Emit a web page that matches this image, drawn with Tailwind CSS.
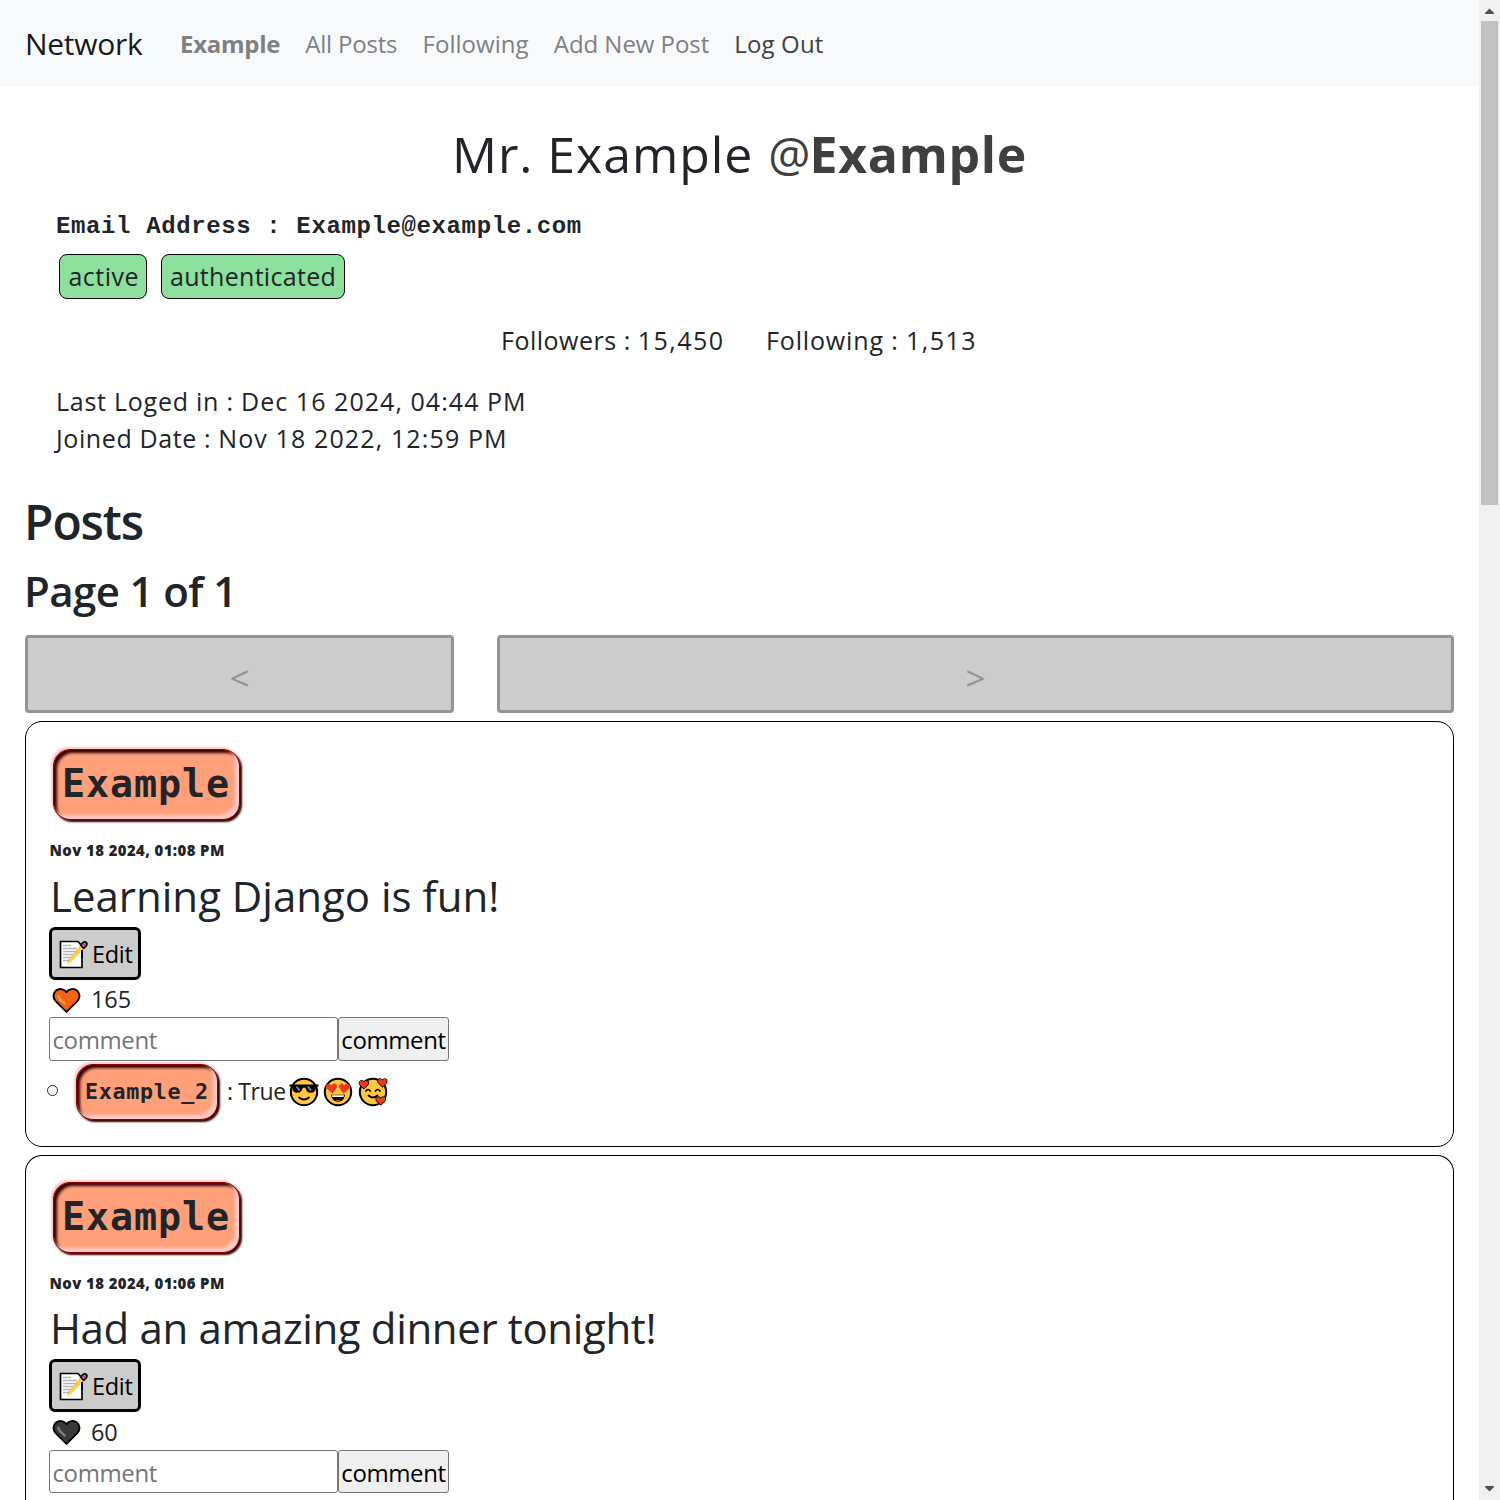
<!DOCTYPE html>
<html lang="en">
<head>
<meta charset="utf-8">
<title>Network</title>
<script src="https://cdn.jsdelivr.net/npm/@tailwindcss/browser@4"></script>
</head>
<body class="flex h-[1500px] w-[1500px] overflow-hidden bg-white font-['Open_Sans',sans-serif] text-[#212529]">
<svg class="hidden">
  <symbol id="memo" viewBox="0 0 30 32">
    <path d="M2.5 3.5H20L24 8V29.5H2.5Z" fill="#fff" stroke="#000" stroke-width="1.7"/>
    <path d="M5 7.5h8M5 10.5h14M5 13.5h13M5 16.500h10M5 19.500h8M5 22.500h6" stroke="#b5b5b5" stroke-width="1.3"/>
    <path d="M24.500 5.500L27.500 8.500L13.500 23L9.500 25.500L11.500 20.500Z" fill="#fcd04a" stroke="#e8a825" stroke-width=".5"/>
    <path d="M22.500 7L24.800 4.700Q27 3 28.400 4.500Q29.700 6.300 28 8.300L25.800 10.500Z" fill="#9b6a78" stroke="#000" stroke-width="1.600" stroke-linejoin="round"/>
    <path d="M24 12V20" stroke="#000" stroke-width="1.700"/>
  </symbol>
  <symbol id="heart" viewBox="0 0 30 27">
    <path d="M15 25.300L4 14.500C.5 11 .8 6 4.200 3.200C7.500.6 12.200 1.200 15 4.800C17.800 1.200 22.500.6 25.800 3.200C29.200 6 29.500 11 26 14.500Z" fill="currentColor" stroke="#000" stroke-width="1.900" stroke-linejoin="round"/>
    <path d="M6.500 8.500Q7 11.500 13 16.500" fill="none" stroke="#fff" stroke-opacity=".35" stroke-width="2.600" stroke-linecap="round"/>
  </symbol>
  <symbol id="cool" viewBox="0 0 30 30">
    <circle cx="15" cy="15" r="13.200" fill="#ffc83d" stroke="#000" stroke-width="2"/>
    <path d="M.5 7.500H29.500V9.200L27 10.200Q26.500 15.800 21.500 15.800Q17.500 15.800 16.300 10.700H13.700Q12.500 15.800 8.500 15.800Q3.500 15.800 3 10.200L.5 9.200Z" fill="#000"/>
    <path d="M7.500 9.500L10.500 13.500M19 9.500L22 13.500" stroke="#8a8a8a" stroke-width="1.800"/>
    <path d="M10 20.500Q15 24.500 20 20.500" fill="none" stroke="#000" stroke-width="1.700" stroke-linecap="round"/>
  </symbol>
  <symbol id="love" viewBox="0 0 30 30">
    <circle cx="15" cy="15" r="13.200" fill="#ffc83d" stroke="#000" stroke-width="2"/>
    <path d="M9.500 16.800L3.600 11.500Q1.800 8.500 4.500 7Q7 6 8.700 8.400Q10.200 5.500 12.700 6.800Q15 8.500 13.200 11.500Z" fill="#f03a17"/>
    <path d="M20.500 16.800L16.800 11.500Q15 8.500 17.300 6.800Q19.800 5.500 21.300 8.400Q23 6 25.500 7Q28.200 8.500 26.400 11.500Z" fill="#f03a17"/>
    <path d="M8 17.700H22Q21 24.700 15 24.700Q9 24.700 8 17.700Z" fill="#000"/>
    <path d="M9 18.200H21L20.500 20H9.500Z" fill="#fff"/>
    <path d="M12.500 23.500Q15 21.800 17.500 23.500Q15 24.900 12.500 23.500Z" fill="#f03a17"/>
  </symbol>
  <symbol id="adore" viewBox="0 0 30 30">
    <circle cx="15" cy="15" r="13.200" fill="#ffc83d" stroke="#000" stroke-width="2"/>
    <path d="M8 14Q10 11 12.200 14M17.500 14Q19.700 11 22 14M10.500 18.500Q15 22.500 19.500 18.500" fill="none" stroke="#000" stroke-width="1.700" stroke-linecap="round"/>
    <g fill="#f03a17" stroke="#000" stroke-width="1.400" paint-order="stroke" stroke-linejoin="round">
      <path d="M5.900 11.500L1.600 7.300Q.8 4.500 3 3.800Q4.800 3.500 5.900 5.300Q7.600 3 9.700 4.300Q11.200 6 9.200 8.300Z"/>
      <path d="M24.500 9.700L20.200 5.300Q19.500 2.500 21.700 1.900Q23.400 1.600 24.500 3.400Q26.200 1.100 28.200 2.300Q29.600 4.200 27.800 6.400Z"/>
      <path d="M22.800 27.700L18.400 23.500Q17.700 20.700 19.900 20.100Q21.700 19.800 22.800 21.600Q24.600 19.200 26.700 20.500Q28.200 22.300 26.300 24.500Z"/>
    </g>
  </symbol>
</svg>

<div class="flex w-[1479px] flex-col">
  <nav class="flex h-[87px] shrink-0 items-center bg-[#f8f9fb] pl-[25px] text-2xl text-[#7f8081]">
    <a class="mr-[37.600px] text-[30px] tracking-[-0.28px] text-[#18191a]">Network</a>
    <div class="flex items-center gap-[25.200px] whitespace-nowrap">
      <a class="font-bold tracking-[-0.300px]">Example</a>
      <a class="tracking-[-0.200px]">All Posts</a>
      <a class="tracking-[0.040px]">Following</a>
      <a class="tracking-[-0.060px]">Add New Post</a>
      <a class="tracking-[0.140px] text-[#404142]">Log Out</a>
    </div>
  </nav>

  <section class="flex shrink-0 flex-col whitespace-nowrap text-[25px]">
    <h1 class="mt-[32px] flex h-[70px] items-center justify-center text-[50px]">
      <span class="tracking-[0.950px]">Mr. Example</span>
      <span class="ml-[15px] text-[47px] text-[#3f3f3f]">@</span>
      <span class="-ml-px font-bold tracking-[0.700px] text-[#3f3f3f]">Example</span>
    </h1>
    <div class="mt-[20px] flex h-[36px] items-center pl-[56px] font-['Liberation_Mono',monospace] text-2xl font-bold tracking-[0.620px]">Email Address : Example@example.com</div>
    <div class="mt-[9px] flex gap-[14px] pl-[59px]">
      <span class="flex h-[45px] w-[88px] items-center rounded-[8px] border border-black bg-[#8cdf9c] pl-[8.500px] tracking-[0.480px]">active</span>
      <span class="flex h-[45px] w-[184px] items-center rounded-[8px] border border-black bg-[#8cdf9c] pl-[8px] tracking-[0.300px]">authenticated</span>
    </div>
    <div class="mt-[23px] flex h-[38px] items-center gap-[39px] pl-[501px]">
      <span class="w-[226px] tracking-[0.500px]">Followers : <span class="tracking-[1.500px]">15,450</span></span>
      <span class="tracking-[0.850px]">Following : <span class="tracking-[1.500px]">1,513</span></span>
    </div>
    <div class="mt-[23px] pl-[56px] leading-[37px]">
      <div class="tracking-[0.750px]">Last Loged in : <span class="tracking-[1.050px]">Dec 16 2024, 04:44 PM</span></div>
      <div class="tracking-[0.600px]">Joined Date : <span class="tracking-[1.130px]">Nov 18 2022, 12:59 PM</span></div>
    </div>
  </section>

  <main class="flex w-[1454px] shrink-0 flex-col pl-[25px]">
    <h2 class="mt-[35px] -ml-px flex h-[60px] items-center text-[48px] font-semibold tracking-[-1.100px]">Posts</h2>
    <h3 class="mt-[11px] -ml-px flex h-[54px] items-center text-[42px] font-semibold tracking-[-0.600px]">Page 1 of 1</h3>
    <div class="mt-[18px] flex h-[78px] gap-[43px] text-[35px] text-[#949494]">
      <button class="w-[429px] rounded-[4px] border-[3px] border-[#949494] bg-[#ccc] pt-[8px]">&lt;</button>
      <button class="grow rounded-[4px] border-[3px] border-[#949494] bg-[#ccc] pt-[8px]">&gt;</button>
    </div>

    <article class="mt-2 flex h-[426px] shrink-0 flex-col rounded-[17px] border border-black pt-[27px] pl-[23px]">
      <a class="ml-[4px] flex h-[71px] w-[187px] items-center rounded-[17px] border border-[#8b0000] bg-[#ffa07a] pb-[2px] pl-[8px] font-['DejaVu_Sans_Mono',monospace] text-[38.400px] font-bold tracking-[0.880px] shadow-[-2px_-2px_2px_#ffc8c8,2px_2px_2px_#300,inset_-4px_-4px_3px_#ffc8c8,inset_3px_3px_3px_#300]">Example</a>
      <div class="mt-[19px] flex h-[22px] items-center pl-[0.500px] text-[14.900px] font-extrabold tracking-[0.420px]">Nov 18 2024, 01:08 PM</div>
      <p class="flex h-[66px] items-center pt-[3px] pl-px text-[42px]">Learning Django is fun!</p>
      <button class="flex h-[53px] w-[92px] items-center rounded-[6px] border-[3px] border-black bg-[#ccc] pl-[6px] text-[23.500px] tracking-[-0.300px] text-black">
        <svg class="mt-px h-8 w-[30px]"><use href="#memo"/></svg><span class="mt-[3px] ml-[4px]">Edit</span>
      </button>
      <div class="flex h-[37px] items-center pl-[3px] text-[23.500px] tracking-[-0.100px]">
        <svg class="mt-[3px] h-[27px] w-[29px] text-[#f7630c]"><use href="#heart"/></svg><span class="mt-[3px] ml-[10px]">165</span>
      </div>
      <div class="flex h-[44px] text-2xl tracking-[-0.380px]">
        <input class="w-[289px] rounded-[3px] border border-[#767676] pt-[2px] pl-[2.500px] placeholder:text-[#757575]" placeholder="comment">
        <button class="w-[111px] rounded-[3px] border border-[#767676] bg-[#efefef] pt-[2px] text-black">comment</button>
      </div>
      <div class="flex h-[60px] items-center text-[23px]">
        <span class="mb-[1px] ml-[-2px] size-[11px] rounded-full border border-[#212529]"></span>
        <a class="ml-[18px] mt-px flex h-[56px] w-[142px] items-center rounded-[17px] border border-[#8b0000] bg-[#ffa07a] pt-[1px] pl-[8px] font-['DejaVu_Sans_Mono',monospace] text-[21.700px] font-bold tracking-[0.700px] shadow-[-2px_-2px_2px_#ffc8c8,2px_2px_2px_#300,inset_-4px_-4px_3px_#ffc8c8,inset_3px_3px_3px_#300]">Example_2</a>
        <span class="ml-[9px] w-[62px] whitespace-nowrap tracking-[-0.400px]">: True</span>
        <span class="mt-px flex gap-[4.300px]">
          <svg class="size-[30px]"><use href="#cool"/></svg>
          <svg class="size-[30px]"><use href="#love"/></svg>
          <svg class="size-[30px]"><use href="#adore"/></svg>
        </span>
      </div>
    </article>

    <article class="mt-2 flex h-[345px] shrink-0 flex-col rounded-t-[17px] border border-b-0 border-black pt-[26px] pl-[23px]">
      <a class="ml-[4px] flex h-[71px] w-[187px] items-center rounded-[17px] border border-[#8b0000] bg-[#ffa07a] pb-[1px] pl-[8px] font-['DejaVu_Sans_Mono',monospace] text-[38.400px] font-bold tracking-[0.880px] shadow-[-2px_-2px_2px_#ffc8c8,2px_2px_2px_#300,inset_-4px_-4px_3px_#ffc8c8,inset_3px_3px_3px_#300]">Example</a>
      <div class="mt-[19px] flex h-[22px] items-center pl-[0.500px] text-[14.900px] font-extrabold tracking-[0.420px]">Nov 18 2024, 01:06 PM</div>
      <p class="flex h-[65px] items-center pt-[2px] pl-px text-[42px] tracking-[-0.360px]">Had an amazing dinner tonight!</p>
      <button class="flex h-[53px] w-[92px] items-center rounded-[6px] border-[3px] border-black bg-[#ccc] pl-[6px] text-[23.500px] tracking-[-0.300px] text-black">
        <svg class="mt-px h-8 w-[30px]"><use href="#memo"/></svg><span class="mt-[3px] ml-[4px]">Edit</span>
      </button>
      <div class="flex h-[38px] items-center pl-[3px] text-[23.500px] tracking-[-0.300px]">
        <svg class="mt-[3px] h-[27px] w-[29px] text-[#383838]"><use href="#heart"/></svg><span class="mt-[3px] ml-[10px]">60</span>
      </div>
      <div class="flex h-[43px] text-2xl tracking-[-0.380px]">
        <input class="w-[289px] rounded-[3px] border border-[#767676] pt-[2px] pl-[2.500px] placeholder:text-[#757575]" placeholder="comment">
        <button class="w-[111px] rounded-[3px] border border-[#767676] bg-[#efefef] pt-[2px] text-black">comment</button>
      </div>
    </article>
  </main>
</div>

<aside class="flex w-[21px] flex-col items-center bg-[#f0f0f0]">
  <svg class="h-[21px] w-[9px] shrink-0" viewBox="0 0 9 21"><path d="M0 14V13L4.500 8.500L9 13V14Z" fill="#505050"/></svg>
  <div class="h-[484px] w-[17px] bg-[#c1c1c1]"></div>
  <svg class="mt-auto h-[21px] w-[9px] shrink-0" viewBox="0 0 9 21"><path d="M0 7V8L4.500 12.500L9 8V7Z" fill="#505050"/></svg>
</aside>
</body>
</html>
